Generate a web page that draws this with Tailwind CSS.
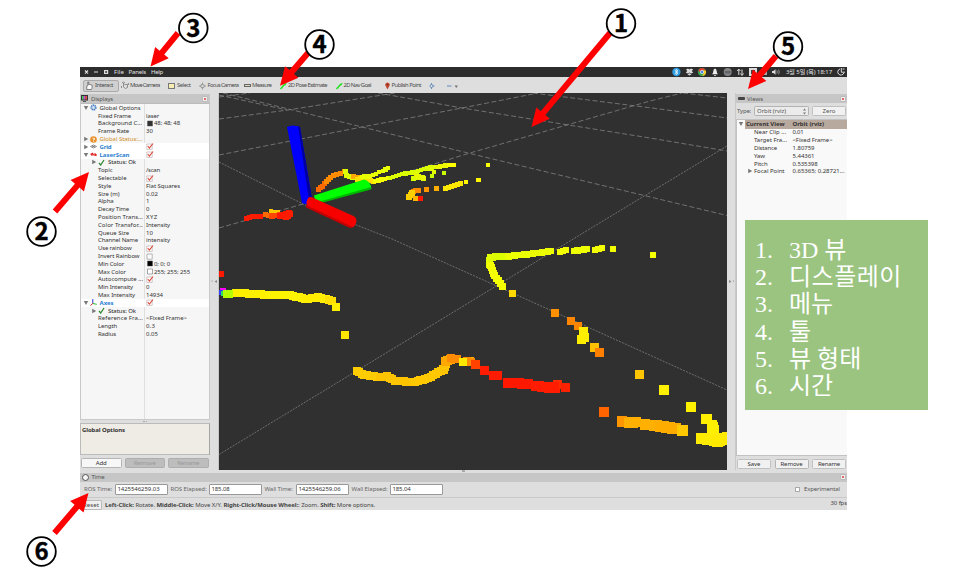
<!DOCTYPE html>
<html lang="ko">
<head>
<meta charset="utf-8">
<title>RViz</title>
<script src="https://cdn.jsdelivr.net/npm/@tailwindcss/browser@4"></script>
</head>
<body class="relative w-[970px] h-[573px] overflow-hidden bg-white pt-[67px] pl-[80px] font-['Noto_Sans','Open_Sans',sans-serif] text-[6px] leading-none text-[#333]">

<main class="flex h-[443px] w-[767px] flex-col overflow-hidden bg-[#dedede]">
  <!-- menu bar -->
  <header class="flex h-[10px] shrink-0 items-center bg-[#2d2d2d] text-[#e4e4e4]">
    <div class="flex w-[34px] items-center pl-[4px]">
      <svg class="h-[6px] w-[26px]" viewBox="0 0 26 6" fill="none" stroke="#ddd" stroke-width="1.2"><path d="M1 1.5l3 3M4 1.5l-3 3M10 3h4M20.6 1.6h3v2.8h-3z"/></svg>
    </div>
    <div class="w-[14.5px]"><span data-w="10">File</span></div>
    <div class="w-[22.5px]"><span data-w="17.5">Panels</span></div>
    <div><span data-w="12">Help</span></div>
    <svg class="ml-auto h-[10px] w-[111px]" viewBox="671 67 111 10">
      <circle cx="676.4" cy="72" r="4.2" fill="#2f9be0"/><path d="M674.6 70.2l3.4 3-1.8 1.500v-5.400l1.800 1.500-3.400 3" stroke="#fff" stroke-width=".7" fill="none"/>
      <path d="M686 69.4l2-1 1.5 1.2 1.5-1.2 2.200 1-1.500 1.600 1.500 1.600-2 1-1.700-1.200-1.700 1.200-2-1 1.500-1.600zM687.500 74.300l2-1 2 1-2 1.200z" fill="#ddd"/>
      <circle cx="702" cy="72" r="4" fill="#35a853"/><path d="M698.400 70.200a4 4 0 0 1 7.400.4l-3.800-.2-2 2z" fill="#e33b2e"/><path d="M702 70.400h3.800a4 4 0 0 1-3.600 5.600l1.600-3z" fill="#f9c920"/><circle cx="702" cy="72" r="1.700" fill="#4a86e8" stroke="#fff" stroke-width=".6"/>
      <path d="M712 74.300q1.300-1 1.300-3 0-2 1.700-2.700 1.700.7 1.700 2.700 0 2 1.300 3zM714 74.900h2v.9h-2z" fill="#eee"/>
      <circle cx="727.700" cy="72" r="4" fill="#858585"/><path d="M725 71h5.500v2.500h-5.500z" fill="#5f646b"/>
      <path d="M738.800 75v-5M737.200 71l1.600-2 1.600 2M742 69.500v5M740.600 73.500l1.400 2 1.500-2" stroke="#ddd" stroke-width="1" fill="none"/>
      <path d="M749 68h8v8h-8z" fill="#ddd"/><path d="M751 70h4v4h-4z" fill="#444"/>
      <path d="M762 70h5v5h-5z" fill="#aaa"/>
      <path d="M772 71h1.500l2-1.800v5.600l-2-1.800h-1.500z" fill="#ddd"/><path d="M776.800 70.400q1 1.600 0 3.200M778.500 69.600q1.600 2.400 0 4.800" stroke="#aaa" stroke-width=".8" fill="none"/>
    </svg>
    <div class="ml-[4px] w-[51px] font-['Noto_Sans','Noto_Sans_CJK_KR',sans-serif]"><span data-w="46">3월 5일 (목) 18:17</span></div>
    <svg class="mr-[2px] h-[8px] w-[8px]" viewBox="0 0 8 8" fill="none" stroke="#ddd"><path d="M3 1A3.100 3.100 0 1 0 6.800 5M4.300 0v4.200H8M5.500 1h2"/></svg>
  </header>

  <!-- tool bar -->
  <nav class="flex h-[16px] shrink-0 items-center whitespace-nowrap bg-[#dedede] pt-[1.500px] pl-[3px] text-[5.800px] text-[#4a4a4a]">
    <div class="flex h-[12.500px] w-[35.500px] items-center gap-[2px] rounded-[2px] border border-[#aaa] bg-[#d0d0d0] pl-[2px]">
      <svg class="h-[9px] w-[7px]" viewBox="0 0 7 9"><path d="M.8 8.500V5l1-.5V1h1v3l1-.7 1 .6 1.300.3V7l-.8 1.500z" fill="#fff" stroke="#555" stroke-width=".7"/></svg>
      <span data-w="18">Interact</span>
    </div>
    <div class="flex w-[46.500px] items-center gap-[1px] pl-[2.500px]">
      <svg class="h-[9px] w-[8px]" viewBox="0 0 8 9" fill="none" stroke="#777" stroke-width=".8"><path d="M1 2l1.500-1L4 2M1 5l-1 1 1 1M2.500 2v4l2 1.500 2-1V3.500h-3M7 2l.8 1L7 4"/></svg>
      <span data-w="29.500">Move Camera</span>
    </div>
    <div class="flex w-[30.500px] items-center gap-[2px] pl-[3px]">
      <i class="h-[6px] w-[7px] border border-[#777] bg-[#f6edb5]"></i>
      <span data-w="13.500">Select</span>
    </div>
    <div class="flex w-[47.500px] items-center gap-[2px] pl-[3px]">
      <svg class="h-[8px] w-[7px]" viewBox="0 0 8 8" fill="none" stroke="#888" stroke-width=".8"><circle cx="4" cy="4" r="2.200"/><path d="M4 0v3M4 5v3M0 4h3M5 4h3"/></svg>
      <span data-w="31">Focus Camera</span>
    </div>
    <div class="flex w-[35px] items-center gap-[1px] pl-[1px]">
      <i class="h-[3px] w-[7px] border border-[#666] bg-[#ddd6b8]"></i>
      <span data-w="19.500">Measure</span>
    </div>
    <div class="flex w-[57px] items-center gap-[1.500px] pl-[1.500px]">
      <svg class="h-[8px] w-[7px]" viewBox="0 0 7 8"><path d="M.5 7L4.500 2.500" stroke="#1be21b" stroke-width="1.400"/><path d="M6.800.8L3.600 2l1.600 1.700z" fill="#1be21b"/></svg>
      <span data-w="39">2D Pose Estimate</span>
    </div>
    <div class="flex w-[46px] items-center gap-[1px] pl-[.5px]">
      <svg class="h-[8px] w-[7px]" viewBox="0 0 7 8"><path d="M.5 7L4.500 2.500" stroke="#1be21b" stroke-width="1.400"/><path d="M6.800.8L3.600 2l1.600 1.700z" fill="#1be21b"/></svg>
      <span data-w="27.500">2D Nav Goal</span>
    </div>
    <div class="flex w-[47px] items-center gap-[1.500px] pl-[4px]">
      <svg class="h-[8px] w-[5px]" viewBox="0 0 5 8"><path d="M2.500 7.500L.8 4.200A2.200 2.200 0 1 1 4.200 4.200z" fill="#c0452f"/><circle cx="2.500" cy="2.600" r=".8" fill="#7a2a1c"/></svg>
      <span data-w="29.500">Publish Point</span>
    </div>
    <svg class="h-[8px] w-[30px]" viewBox="430 81 30 8" fill="none"><circle cx="433.500" cy="85" r="1.500" stroke="#5684b4" stroke-width=".8"/><path d="M433.500 82v1.500M433.500 86.500V88M435 85h1.500M449 85h4.500" stroke="#5684b4" stroke-width=".9"/><path d="M456.500 84.500h3.500l-1.700 2.500z" fill="#777"/></svg>
  </nav>

  <!-- panels -->
  <section class="flex h-[377px] shrink-0">
    <aside class="flex w-[130px] shrink-0 flex-col pt-px">
      <h2 class="flex h-[9px] shrink-0 items-center bg-[#c6c6c6] pr-[2px] pl-[1px] text-[#555]">
        <svg class="mr-[3px] h-[7px] w-[7px]" viewBox="0 0 7 7"><path d="M0 0h7v5.500H0z" fill="#333"/><path d="M1 1h1.700v3.500H1z" fill="#4bd35f"/><path d="M2.700 1h1.600v3.500H2.700z" fill="#c44be0"/><path d="M4.300 1H6v3.500H4.300z" fill="#e0524b"/><path d="M2 6h3v1H2z" fill="#555"/></svg>
        <span data-w="22">Displays</span>
        <i class="ml-auto flex size-[6px] items-center justify-center rounded-[1px] border-[.5px] border-[#bbb] bg-[#f3eeee]"><b class="size-[2px] bg-[#de6a6a]"></b></i>
      </h2>
      <div class="h-[317px] shrink-0 border border-[#c9c9c9] border-t-[#bbb] bg-[#f6f6f6]">
        <div id="displays" class="h-full bg-linear-to-r from-transparent from-[63px] via-[#c8c8c8] via-[63px] to-transparent to-[64px]"></div>
      </div>
      <div class="flex h-[3px] shrink-0 items-center justify-center gap-px"><i class="size-[1.500px] bg-[#aaa]"></i><i class="size-[1.500px] bg-[#aaa]"></i></div>
      <div class="h-[32px] shrink-0 border border-[#bbb] border-r-[#a5a5a5] bg-[#efebe5] pt-[2.500px] pl-[1px] font-bold"><span data-w="43">Global Options</span></div>
      <div class="flex grow items-center gap-[3px] pt-[1.500px] pl-[1px] text-center">
        <button class="h-[10px] w-[40.500px] rounded-[1.500px] border border-[#b5b5b5] bg-[#f7f7f7]"><span data-w="11">Add</span></button>
        <button class="h-[10px] w-[40.500px] rounded-[1.500px] border border-[#aeaeae] bg-[#bdbdbd] text-[#999]"><span data-w="22">Remove</span></button>
        <button class="h-[10px] w-[40.500px] rounded-[1.500px] border border-[#aeaeae] bg-[#bdbdbd] text-[#999]"><span data-w="22">Rename</span></button>
      </div>
    </aside>
    <div class="flex w-[9px] shrink-0 items-center justify-end border-r border-[#c8c8c8]"><svg class="h-[5px] w-[7px]" viewBox="0 0 7 5"><path d="M6 1v3L3.500 2.500zM.5 1.500h1v1h-1z" fill="#8a8a8a"/></svg></div>
    <svg id="scene" class="h-[377px] w-[508px] shrink-0 bg-[#303030]" viewBox="219 93 508 377">
      <g stroke="#858585" stroke-width=".75" stroke-dasharray="5 2.500" fill="none">
        <path d="M223 93L362 127 468 153 727 215.500M219 119L288 110 395 93M219 155L362 127 462 108 538 93M219 228L303 204 470 153 650 101 682 93M378 93L462 108 650 138 727 151M219 97L250 93M219 95L287 110M533 93L652 108 727 118M683 93L727 98"/>
      </g>
      <g stroke="#8a8a8a" stroke-width=".7" stroke-dasharray="2 1.200" fill="none"><path d="M219 162L303 204 392 239 470 274 550 310 727 390M219 454.500L470 302 588 230 727 146"/></g>
      <g id="cloud" shape-rendering="crispEdges"></g>
      <path d="M287 127q6-3 13 0l12.500 75q-4 4-10.500 1z" fill="#0000fc"/><path d="M300 127l12.500 75-3 2-11.500-78z" fill="#0000a0"/>
      <path d="M314 195.500l50-16q6 1 7.500 9l-50 14q-7 0-7.500-7z" fill="#0f0"/><path d="M318 202l53-15v2.500l-50 13.500z" fill="#00b800"/>
      <path d="M308.500 197.500q3-1 5 .5l40 18q4 2 2.500 7-1.500 4.500-5 4.500l-42-20q-5-4-.5-10z" fill="#f60000"/><path d="M306 207.500l44 20.500 3-1-47-22z" fill="#c40000"/>
    </svg>
    <div class="flex w-[9px] shrink-0 items-center border-r border-[#c8c8c8]"><svg class="h-[5px] w-[7px]" viewBox="0 0 7 5"><path d="M2 1v3l2.500-1.500zM6 1.500h1v1h-1z" fill="#8a8a8a"/></svg></div>
    <aside class="flex w-[111px] shrink-0 flex-col pt-px">
      <h2 class="flex h-[9px] shrink-0 items-center bg-[#c6c6c6] pr-[1px] pl-[2px] text-[#555]">
        <i class="mr-[2px] h-[3px] w-[7px] rounded-[1px] bg-[#444]"></i>
        <span data-w="16">Views</span>
        <i class="ml-auto flex size-[6px] items-center justify-center rounded-[1px] border-[.5px] border-[#bbb] bg-[#f3eeee]"><b class="size-[2px] bg-[#de6a6a]"></b></i>
      </h2>
      <div class="flex h-[16px] shrink-0 items-center pl-[1px] text-[#555]">
        <div class="w-[17px]"><span data-w="14">Type:</span></div>
        <div class="flex h-[10px] w-[54.500px] items-center justify-between rounded-[1.500px] border border-[#b2b2b2] bg-[#ebebeb] pr-[2px] pl-[2px]"><span data-w="29">Orbit (rviz)</span><svg class="h-[7px] w-[3px]" viewBox="0 0 3 7"><path d="M0 2.500L1.500.5 3 2.500zM0 4.500h3L1.500 6.500z" fill="#777"/></svg></div>
        <button class="ml-[3.500px] h-[10px] w-[34px] rounded-[1.500px] border border-[#c0c0c0] bg-[#f1f1f1]"><span data-w="13">Zero</span></button>
      </div>
      <div id="views" class="h-[337px] shrink-0 border border-r-0 border-[#c2c2c2] bg-[#f9f9f9]"></div>
      <div class="flex grow items-center gap-[3.500px] pt-[2px] pl-[1px] text-center">
        <button class="h-[10px] w-[34px] rounded-[1.500px] border border-[#c0c0c0] bg-[#f1f1f1]"><span data-w="13">Save</span></button>
        <button class="h-[10px] w-[34px] rounded-[1.500px] border border-[#b5b5b5] bg-[#f1f1f1]"><span data-w="22">Remove</span></button>
        <button class="h-[10px] w-[34px] rounded-[1.500px] border border-[#c0c0c0] bg-[#f1f1f1]"><span data-w="22">Rename</span></button>
      </div>
    </aside>
  </section>

  <!-- time panel -->
  <div class="flex h-[3px] shrink-0 justify-center"><i class="h-[2px] w-[3px] bg-[#aaa]"></i></div>
  <h2 class="flex h-[8.500px] shrink-0 items-center bg-[#c6c6c6] pr-[1px] pl-[2px] text-[#555]">
    <i class="mr-[3px] size-[6.500px] rounded-full border border-[#555] bg-[#f5f5f5]"></i><span data-w="13">Time</span>
    <i class="ml-auto flex size-[6px] items-center justify-center rounded-[1px] border-[.5px] border-[#bbb] bg-[#f3eeee]"><b class="size-[2px] bg-[#de6a6a]"></b></i>
  </h2>
  <div class="flex h-[16.500px] shrink-0 items-center border-b border-[#c9c9c9] pl-[4px] text-[#666]">
    <div class="w-[31px]"><span data-w="28">ROS Time:</span></div>
    <div class="flex h-[10.500px] w-[52.500px] items-center rounded-[1px] border border-[#999] bg-white pl-[1.500px] text-[#333]"><span data-w="42">1425546259.03</span></div>
    <div class="ml-[3px] w-[38.500px]"><span data-w="36">ROS Elapsed:</span></div>
    <div class="flex h-[10.500px] w-[52.500px] items-center rounded-[1px] border border-[#999] bg-white pl-[1.500px] text-[#333]"><span data-w="18">185.08</span></div>
    <div class="ml-[3px] w-[31.500px]"><span data-w="28">Wall Time:</span></div>
    <div class="flex h-[10.500px] w-[52.500px] items-center rounded-[1px] border border-[#999] bg-white pl-[1.500px] text-[#333]"><span data-w="42">1425546259.06</span></div>
    <div class="ml-[3px] w-[38.500px]"><span data-w="36">Wall Elapsed:</span></div>
    <div class="flex h-[10.500px] w-[52.500px] items-center rounded-[1px] border border-[#999] bg-white pl-[1.500px] text-[#333]"><span data-w="18">185.04</span></div>
    <i class="mr-[4px] ml-auto size-[5.500px] border-[.5px] border-[#aaa] bg-white"></i>
    <div class="w-[43px] text-[#555]"><span data-w="36">Experimental</span></div>
  </div>
  <footer class="flex grow items-center whitespace-nowrap pt-px text-[#444]">
    <div class="flex h-[10px] w-[22px] items-center rounded-[1px] border border-[#bbb] bg-[#f0f0f0] pl-[2px]"><span data-w="16">Reset</span></div>
    <div class="ml-[3px]"><span data-w="270"><b>Left-Click:</b> Rotate. <b>Middle-Click:</b> Move X/Y. <b>Right-Click/Mouse Wheel:</b>: Zoom. <b>Shift:</b> More options.</span></div>
    <div class="ml-auto pb-[3px]"><span data-w="16.500">30 fps</span></div>
  </footer>
</main>

<!-- numbered legend -->
<ol class="absolute top-[219.500px] left-[745px] h-[190.500px] w-[182.500px] bg-[#9ac47f] pt-[17.500px] pl-[10px] font-['Liberation_Serif','Noto_Sans_CJK_KR',serif] text-[24px] leading-[27.200px] text-white">
  <li class="flex h-[27.200px]"><span class="w-[34px]">1.</span>3D 뷰</li>
  <li class="flex h-[27.200px]"><span class="w-[34px]">2.</span><span class="tracking-[.5px]">디스플레이</span></li>
  <li class="flex h-[27.200px]"><span class="w-[34px]">3.</span>메뉴</li>
  <li class="flex h-[27.200px]"><span class="w-[34px]">4.</span>툴</li>
  <li class="flex h-[27.200px]"><span class="w-[34px]">5.</span>뷰 형태</li>
  <li class="flex h-[27.200px]"><span class="w-[34px]">6.</span>시간</li>
</ol>

<!-- callouts -->
<svg id="callouts" class="absolute top-0 left-0 h-[573px] w-[970px] font-['Noto_Sans_CJK_KR',sans-serif] text-[24px] font-bold" viewBox="0 0 970 573"></svg>

<script>
const check = '<svg class="h-[7px] w-[8px]" viewBox="0 0 8 7"><path d="M.8 1h5.400v5.400H.8z" fill="#fff" stroke="#b9a5a5" stroke-width=".6"/><path d="M1.800 3l1.600 2.200L7 .5" fill="none" stroke="#d9483b" stroke-width="1.100"/></svg>';
const box = '<svg class="h-[7px] w-[8px]" viewBox="0 0 8 7"><path d="M1 1h5.200v5.200H1z" fill="#fff" stroke="#999" stroke-width=".7"/></svg>';
const swatch = c => `<svg class="mr-[1px] h-[7px] w-[7px]" viewBox="0 0 7 7"><path d="M1.500 1h5v5h-5z" fill="${c}" stroke="#555" stroke-width=".5"/></svg>`;
const down = '<svg class="h-[6px] w-[6px]" viewBox="0 0 6 6"><path d="M.8 1h4.400L3 5z" fill="#777"/></svg>';
const right = '<svg class="h-[6px] w-[6px]" viewBox="0 0 6 6"><path d="M1.200.8l4 2.200-4 2.200z" fill="#777"/></svg>';
const tick = '<svg class="h-[7px] w-[7px]" viewBox="0 0 7 7"><path d="M1 4l1.700 2L6 1" fill="none" stroke="#2f8a35" stroke-width="1.300"/></svg>';
const gear = '<svg class="h-[7px] w-[7px]" viewBox="0 0 7 7"><circle cx="3.500" cy="3.500" r="2.300" fill="#cfe0f5" stroke="#4d80c0" stroke-width="1.700" stroke-dasharray="1.300 .5"/></svg>';
const warn = '<svg class="h-[7px] w-[7px]" viewBox="0 0 7 7"><circle cx="3.500" cy="3.500" r="3.300" fill="#e8902a"/><path d="M2.500 2.300h2v1.300h-1v1M3.500 5v.8" stroke="#fff" stroke-width=".8" fill="none"/></svg>';
const eye = '<svg class="h-[7px] w-[7px]" viewBox="0 0 7 7"><path d="M.5 3.500L3.500 2l3 1.500-3 1.500zM2 2.700l3 1.500M5 2.700L2 4.200" stroke="#777" stroke-width=".8" fill="none"/></svg>';
const scan = '<svg class="h-[7px] w-[7px]" viewBox="0 0 7 7"><path d="M.5 3.500l2-1.200 1 1.500 3 .8M4.500 2.300L6.500 4M1 4h2" stroke="#e02020" stroke-width="1.100" fill="none"/></svg>';
const axes = '<svg class="h-[7px] w-[7px]" viewBox="0 0 7 7" fill="none"><path d="M2.800 0v4.500" stroke="#33c" /><path d="M2.800 4.500l4 .8" stroke="#2b2"/><path d="M2.800 4.500L.5 6.500" stroke="#d22"/></svg>';
const t = (s, w) => `<span data-w="${w}">${s}</span>`;
// First field: 0 property, 1 top-level heading, 2 status line
const rows = [
 [1, down, gear, t('Global Options',41), '', ''],
 [0, t('Fixed Frame',33), t('laser',13)],
 [0, t('Background C...',44), swatch('#303030') + t('48; 48; 48',26)],
 [0, t('Frame Rate',31), t('30',7)],
 [1, right, warn, t('Global Status:...',43), '', 'text-[#d08f28]'],
 [1, right, eye, t('Grid',12), check, 'font-bold text-[#2d7fd0] bg-white'],
 [1, down, scan, t('LaserScan',30), check, 'font-bold text-[#2d7fd0] bg-white'],
 [2],
 [0, t('Topic',14.5), t('/scan',14)],
 [0, t('Selectable',28.5), check],
 [0, t('Style',13.5), t('Flat Squares',34)],
 [0, t('Size (m)',21.5), t('0.02',12)],
 [0, t('Alpha',15.5), t('1',3)],
 [0, t('Decay Time',31), t('0',4)],
 [0, t('Position Trans...',45), t('XYZ',11.5)],
 [0, t('Color Transfor...',45), t('Intensity',24)],
 [0, t('Queue Size',31), t('10',7)],
 [0, t('Channel Name',40), t('intensity',24)],
 [0, t('Use rainbow',33.5), check],
 [0, t('Invert Rainbow',41.5), box],
 [0, t('Min Color',26), swatch('#000') + t('0; 0; 0',16)],
 [0, t('Max Color',28), swatch('#fff') + t('255; 255; 255',36)],
 [0, t('Autocompute ...',45), check],
 [0, t('Min Intensity',35), t('0',4)],
 [0, t('Max Intensity',37), t('14934',17)],
 [1, down, axes, t('Axes',14), check, 'font-bold text-[#2d7fd0] bg-white'],
 [2],
 [0, t('Reference Fra...',45), t('&lt;Fixed Frame&gt;',41)],
 [0, t('Length',19), t('0.3',9)],
 [0, t('Radius',18), t('0.05',12)]
];
document.getElementById('displays').innerHTML = rows.map(r => {
  if (r[0] === 1) return `<div class="flex h-[7.800px] items-center whitespace-nowrap ${r[5]}"><div class="flex w-[65px] items-center gap-[1px] pl-[1.500px]">${r[1]}${r[2]}<span class="w-[1px]"></span>${r[3]}</div>${r[4]}</div>`;
  if (r[0] === 2) return `<div class="flex h-[7.800px] items-center whitespace-nowrap text-[#222]"><div class="flex items-center gap-[1px] pl-[10px]">${right}${tick}<span class="w-[1px]"></span>${t('Status: Ok',28)}</div></div>`;
  return `<div class="flex h-[7.800px] items-center whitespace-nowrap"><div class="w-[65px] pl-[17px]">${r[1]}</div>${r[2]}</div>`;
}).join('');

const views = [['Near Clip ...',32,'0.01',11],['Target Fra...',33,'&lt;Fixed Frame&gt;',40],['Distance',23,'1.80759',22],['Yaw',11,'5.44361',22],['Pitch',13.5,'0.535398',25],['Focal Point',30.5,'0.65365; 0.28721...',52]];
document.getElementById('views').innerHTML =
  `<div class="flex h-[8.500px] items-center whitespace-nowrap font-bold"><div class="flex w-[8px] items-center pl-[1px]">${down}</div><div class="flex h-full grow items-center bg-[#b8a99f]"><div class="w-[47.500px] pl-[1px]">${t('Current View',38.5)}</div>${t('Orbit (rviz)',31.5)}</div></div>` +
  views.map((v, i) => `<div class="flex h-[7.800px] items-center whitespace-nowrap"><div class="flex w-[17px] justify-end pr-[1.500px]">${i === 5 ? right : ''}</div><div class="w-[38.500px]">${t(v[0], v[1])}</div>${t(v[2], v[3])}</div>`).join('');

// Fit each label to its nominal width through letter spacing.
const ctx = document.createElement('canvas').getContext('2d');
const measure = (s, bold, size) => {
  ctx.font = `${bold ? 'bold ' : ''}60px "Noto Sans", "Noto Sans CJK KR", sans-serif`;
  return ctx.measureText(s).width * size / 60;
};
document.querySelectorAll('[data-w]').forEach(e => {
  const bold = !!e.closest('.font-bold'), size = e.closest('nav') ? 5.8 : 6;
  let w = 0;
  e.childNodes.forEach(n => { w += measure(n.textContent, bold || n.nodeName === 'B', size); });
  e.style.letterSpacing = ((+e.dataset.w - w) / e.textContent.length).toFixed(3) + 'px';
});

// Laser points: [colour, size, x, y, x, y, ...]; consecutive points are joined by squares.
const strokes = [
 ['#ff6a00',5,318,189,322,186,326,181],['#ff8c00',5,326,181,333,175,340,173,344,171],['#dfff00',5,345,171,346,175,352,177],['#ffa800',5,353,176,357,177],
 ['#ffe000',5,357,179,366,178,373,181],['#e8ff00',4.5,362,177,370,176,376,174],['#eaff00',4.5,379,172],['#eaff00',4.5,383,171,388,168],
 ['#f4ff00',4.5,375,181,388,178],['#dcff00',4.5,390,178,402,174,415,172,424,169,434,167],['#f0f800',4.5,437,167,448,165],['#ffff00',4.5,449,165,454,165],
 ['#e4ff00',4.5,432,169,434,172],['#d8ff00',5,413,178,422,177],['#e8f800',5,416,175,423,178],['#c8ff00',4.5,432,176],['#c8ff00',4.5,444,173],
 ['#f8ff00',4,488,165],['#fff600',4.5,478.5,180],['#fff600',4.5,466,182],['#ffe800',5,445,188,460,183],['#ffae00',5,436,188],['#ff9600',5,426,189],
 ['#ff8c00',5,418,190,413,191],['#ffd000',6,412,193,409,197],['#ffb400',5,415,198],['#ff1800',5,420,198],
 ['#ff1c00',5,246,218,252,216,260,216],['#ff6a00',5,265,214,272,216],['#ffc800',4,271,211,278,212],['#ff4600',5.5,272,216,280,215],['#ff1800',6,280,216,289,213],['#ff1c00',6,286,217,290,214],
 ['#ff1800',6,221,273.5],['#ff00ff',3,221,289,224,289],['#3040ff',5,221,292],['#30e060',5,223,293],['#fff000',8,236,293,258,294,270,295],['#b4ff00',8,227,294,229,294],['#fff400',8,270,295,290,295,305,299],['#ffee00',8,305,299,318,297,329,300],['#ffe000',8,329,300,332,301],['#fff000',8,335.5,307],['#ffe400',8,344.7,334.7],
 ['#ffcc00',8,357,371,364,375,380,377],['#ffc400',8,380,377,387,376,395,381,415,382],['#ffc800',8,415,382,428,378,443,369],['#ffc400',8,444,370,447,361],['#ffa800',9,445,361,450,359],['#ff8c00',8,451,358,457,359],['#ffb000',8,470,361],['#ff8c00',8,467,361,471,362],['#ffe800',8,462.5,361.8],['#ff4200',9,475.5,364.5],
 ['#ff1c00',9,484.7,370.5],['#ff1c00',9,493,375.5,497,375.5],['#ff1800',10,508,382.5,528,384],['#ff1c00',10,536,386,555,388],['#ff2c00',9,557,384],['#ff1c00',9,548,388,554,386],['#ff2200',9,565.5,387.5],
 ['#dcff00',7,492,257,508,256],['#ecff00',6.5,508,256,530,254,551,251],['#f4ff00',6.5,560,252,566,250],['#eeff00',6.5,574,251,587,249],['#f4ff00',6.5,595,250,602,248],['#f4ff00',6,612.7,249],['#f4ff00',6,652.8,254.8],
 ['#e0ff00',7,490,257,489.5,264],['#f4ff00',7,490,265,493,273,502,286],['#ffd800',7,512.5,293],
 ['#ff9000',8,555,313],['#ff8400',8,570.5,321],['#ff8400',8,578,326],['#ffee00',9,583,331,584,337,581,339],['#ffc000',9,594,347.5],['#ff8000',9,599.5,352],
 ['#ffc400',9,639.5,374.5],['#fff000',10,664,390],['#fff000',10,691,407],['#fff000',10.5,706.5,419,707,419],['#fff000',10.5,712,425,714,433],['#ffec00',11,701,438,714,440,723,438],
 ['#ffea00',11,717,441,727,437],['#ff6400',10,604,411.5],['#ff9600',10.5,622,421.5],['#ffb000',10.5,629,423,636,422],['#ffb000',10.5,645,424.5,660,426],['#ffac00',11,660,426,675,428.5],['#ffc800',10.5,682.5,430.5]
];
let cloud = '';
const sq = (x, y, s, c) => { cloud += `<rect x="${(x - s / 2).toFixed(1)}" y="${(y - s / 2).toFixed(1)}" width="${s}" height="${s}" fill="${c}"/>`; };
for (const [c, s, ...p] of strokes) {
  sq(p[0], p[1], s, c);
  for (let i = 2; i < p.length; i += 2) {
    const dx = p[i] - p[i - 2], dy = p[i + 1] - p[i - 1], n = Math.max(1, Math.round(Math.hypot(dx, dy) / 3));
    for (let k = 1; k <= n; k++) sq(p[i - 2] + dx * k / n, p[i - 1] + dy * k / n, s, c);
  }
}
document.getElementById('cloud').innerHTML = cloud;

// Callout: number, circle centre, arrow start, arrow tip.
const calls = [[1,621,23.5,610,33,531.5,127],[2,41.5,231.5,55,211.5,89,172],[3,193.3,28,178,33,150.5,66.5],[4,319.5,44.5,308,53,280,85.7],[5,788,46.5,776,56,748,89],[6,41.5,551.5,54.5,533,88.5,493]];
document.getElementById('callouts').innerHTML = calls.map(([n, cx, cy, x, y, tx, ty]) => {
  const L = Math.hypot(tx - x, ty - y), a = Math.atan2(ty - y, tx - x) * 180 / Math.PI;
  return `<path transform="translate(${x} ${y}) rotate(${a})" d="M0 -3H${L - 18}V-8.800L${L} 0L${L - 18} 8.800V3H0z" fill="#f00"/><circle cx="${cx}" cy="${cy}" r="14.300" fill="#fff" stroke="#000" stroke-width="1.800"/><text x="${cx}" y="${cy + 8.5}" text-anchor="middle" stroke="#000" stroke-width=".4">${n}</text>`;
}).join('');
</script>
</body>
</html>
